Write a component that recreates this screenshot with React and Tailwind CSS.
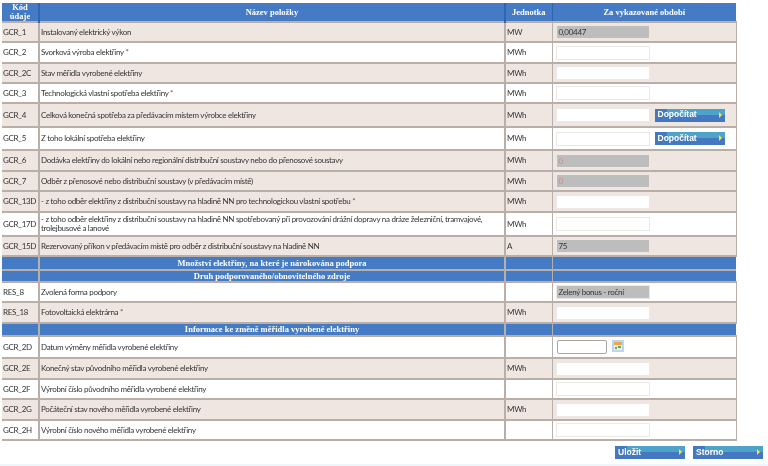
import React from 'react';

const rows = [
  { code: 'GCR_1', name: 'Instalovaný elektrický výkon', unit: 'MW', h: 'h-[20px]', value: '0,00447', off: true },
  { code: 'GCR_2', name: 'Svorková výroba elektřiny', star: true, unit: 'MWh', h: 'h-[21px]' },
  { code: 'GCR_2C', name: 'Stav měřidla vyrobené elektřiny', unit: 'MWh', h: 'h-[20px]' },
  { code: 'GCR_3', name: 'Technologická vlastní spotřeba elektřiny', star: true, unit: 'MWh', h: 'h-[20px]' },
  { code: 'GCR_4', name: 'Celková konečná spotřeba za předávacím místem výrobce elektřiny', unit: 'MWh', h: 'h-[24px]', calc: true },
  { code: 'GCR_5', name: 'Z toho lokální spotřeba elektřiny', unit: 'MWh', h: 'h-[23px]', calc: true },
  { code: 'GCR_6', name: 'Dodávka elektřiny do lokální nebo regionální distribuční soustavy nebo do přenosové soustavy', unit: 'MWh', h: 'h-[21px]', value: '0', off: true, red: true },
  { code: 'GCR_7', name: 'Odběr z přenosové nebo distribuční soustavy (v předávacím místě)', unit: 'MWh', h: 'h-[20px]', value: '0', off: true, red: true },
  { code: 'GCR_13D', name: '- z toho odběr elektřiny z distribuční soustavy na hladině NN pro technologickou vlastní spotřebu', star: true, unit: 'MWh', h: 'h-[21px]' },
  { code: 'GCR_17D', name: '- z toho odběr elektřiny z distribuční soustavy na hladině NN spotřebovaný při provozování drážní dopravy na dráze železniční, tramvajové, trolejbusové a lanové', unit: 'MWh', h: 'h-[24px]' },
  { code: 'GCR_15D', name: 'Rezervovaný příkon v předávacím místě pro odběr z distribuční soustavy na hladině NN', unit: 'A', h: 'h-[20px]', value: '75', off: true },
  { title: 'Množství elektřiny, na které je nárokována podpora', h: 'h-[14px]' },
  { title: 'Druh podporovaného/obnovitelného zdroje', h: 'h-[12px]' },
  { code: 'RES_8', name: 'Zvolená forma podpory', unit: '', h: 'h-[20px]', value: 'Zelený bonus - roční', off: true, white: true },
  { code: 'RES_18', name: 'Fotovoltaická elektrárna', star: true, unit: 'MWh', h: 'h-[21px]' },
  { title: 'Informace ke změně měřidla vyrobené elektřiny', h: 'h-[13px]' },
  { code: 'GCR_2D', name: 'Datum výměny měřidla vyrobené elektřiny', unit: '', h: 'h-[22px]', date: true },
  { code: 'GCR_2E', name: 'Konečný stav původního měřidla vyrobené elektřiny', unit: 'MWh', h: 'h-[21px]' },
  { code: 'GCR_2F', name: 'Výrobní číslo původního měřidla vyrobené elektřiny', unit: '', h: 'h-[20px]' },
  { code: 'GCR_2G', name: 'Počáteční stav nového měřidla vyrobené elektřiny', unit: 'MWh', h: 'h-[21px]' },
  { code: 'GCR_2H', name: 'Výrobní číslo nového měřidla vyrobené elektřiny', unit: '', h: 'h-[20px]' },
];

const BlueButton = ({ label }) => (
  <button className="relative block w-[70px] h-[13px] bg-[#4478c0] text-left pl-[3px] text-white text-[8.5px] leading-[10px] tracking-normal font-bold font-['Liberation_Sans',sans-serif] overflow-hidden">
    <span className="absolute left-[12px] right-0 top-0 h-[6px] bg-[#4fa3c8]" />
    <span className="relative block -mt-[2px]">{label}</span>
    <span className="absolute right-[3px] top-[3px] w-0 h-0 border-y-[3px] border-y-transparent border-l-[3px] border-l-[#f5e63c]" />
  </button>
);

const CalendarIcon = () => (
  <svg width="12" height="12" viewBox="0 0 12 12" className="block -mt-[3px]">
    <rect width="12" height="12" fill="#bcd6ee" />
    <rect x="2" y="2" width="8" height="8" fill="#e8eef0" />
    <rect x="2" y="2" width="8" height="3" fill="#eda64a" />
    <rect x="3" y="7" width="2" height="2" fill="#6aa84f" />
    <rect x="6" y="6" width="3" height="2" fill="#6aa84f" />
  </svg>
);

const Row = ({ row, index }) => {
  const bg = row.white || (!row.off && index % 2 === 1) ? 'bg-white' : 'bg-[#efe6e2]';
  return (
    <tr className={`${row.h} ${bg} border-b-2 border-[#b9afa9]`}>
      <td className="p-0 pl-[1px] border-r-2 border-[#b9afa9] whitespace-nowrap">{row.code}</td>
      <td className="p-0 pl-[1px] border-r-2 border-[#b9afa9]">
        {row.name}
        {row.star && <span className="text-[#8a4a4a]"> *</span>}
      </td>
      <td className="p-0 pl-[1px] border-r border-[#b9afa9]">{row.unit}</td>
      <td className="p-0 pl-[3px] border-r border-[#b9afa9]">
        <div className="flex items-center">
          {row.date ? (
            <div className="flex items-center gap-[5px] ml-[1px]">
              <div className="w-[50px] h-[14px] bg-white border border-[#aaa5a0] rounded-[2px]" />
              <CalendarIcon />
            </div>
          ) : (
            <div className={`w-[94px] h-[14px] pl-[2px] leading-[12px] border border-[#ebe8e6] ${row.off ? 'bg-[#bdbdbd]' : 'bg-white'} ${row.red ? 'text-[#c78a84]' : ''}`}>
              {row.value}
            </div>
          )}
          {row.calc && <div className="ml-[5px]"><BlueButton label="Dopočítat" /></div>}
        </div>
      </td>
    </tr>
  );
};

const TitleRow = ({ row }) => (
  <tr className={`${row.h} bg-[#457bc4] border-b-2 border-[#b9afa9] text-white text-center font-bold tracking-normal font-['Liberation_Serif',serif] text-[8.5px] leading-[9px]`}>
    <td className="p-0 border-r-2 border-[#b9afa9]" />
    <td className="p-0 border-r-2 border-[#b9afa9]">{row.title}</td>
    <td className="p-0 border-r border-[#b9afa9]" />
    <td className="p-0" />
  </tr>
);

export default function App() {
  let shade = 0;
  return (
    <div className="w-[768px] h-[466px] bg-white overflow-hidden flex flex-col pl-[2px] pt-[3px] text-[#333] text-[8px] leading-[9px] tracking-[-0.3px] font-['Lato',sans-serif] blur-[0.25px]">
      <table className="w-[734px] table-fixed border-collapse">
        <colgroup>
          <col className="w-[37px]" />
          <col className="w-[466px]" />
          <col className="w-[47px]" />
          <col className="w-[184px]" />
        </colgroup>
        <thead>
          <tr className="h-[19px] bg-[#457bc4] border-b-2 border-[#b9afa9] text-white text-center font-bold tracking-normal font-['Liberation_Serif',serif] text-[8.5px] leading-[9px]">
            <th className="p-0 border-r-2 border-[#2f65ae]">Kód<br />údaje</th>
            <th className="p-0 border-r-2 border-[#2f65ae]">Název položky</th>
            <th className="p-0 border-r border-[#2f65ae]">Jednotka</th>
            <th className="p-0">Za vykazované období</th>
          </tr>
        </thead>
        <tbody>
          {rows.map((row) => {
            if (row.title) return <TitleRow key={row.title} row={row} />;
            return <Row key={row.code} row={row} index={shade++} />;
          })}
        </tbody>
      </table>
      <div className="flex justify-end gap-[8px] w-[761px] mt-[5px]">
        <BlueButton label="Uložit" />
        <BlueButton label="Storno" />
      </div>
      <div className="mt-[5px] -ml-[2px] h-[2px] bg-[#eef5fb]" />
    </div>
  );
}
